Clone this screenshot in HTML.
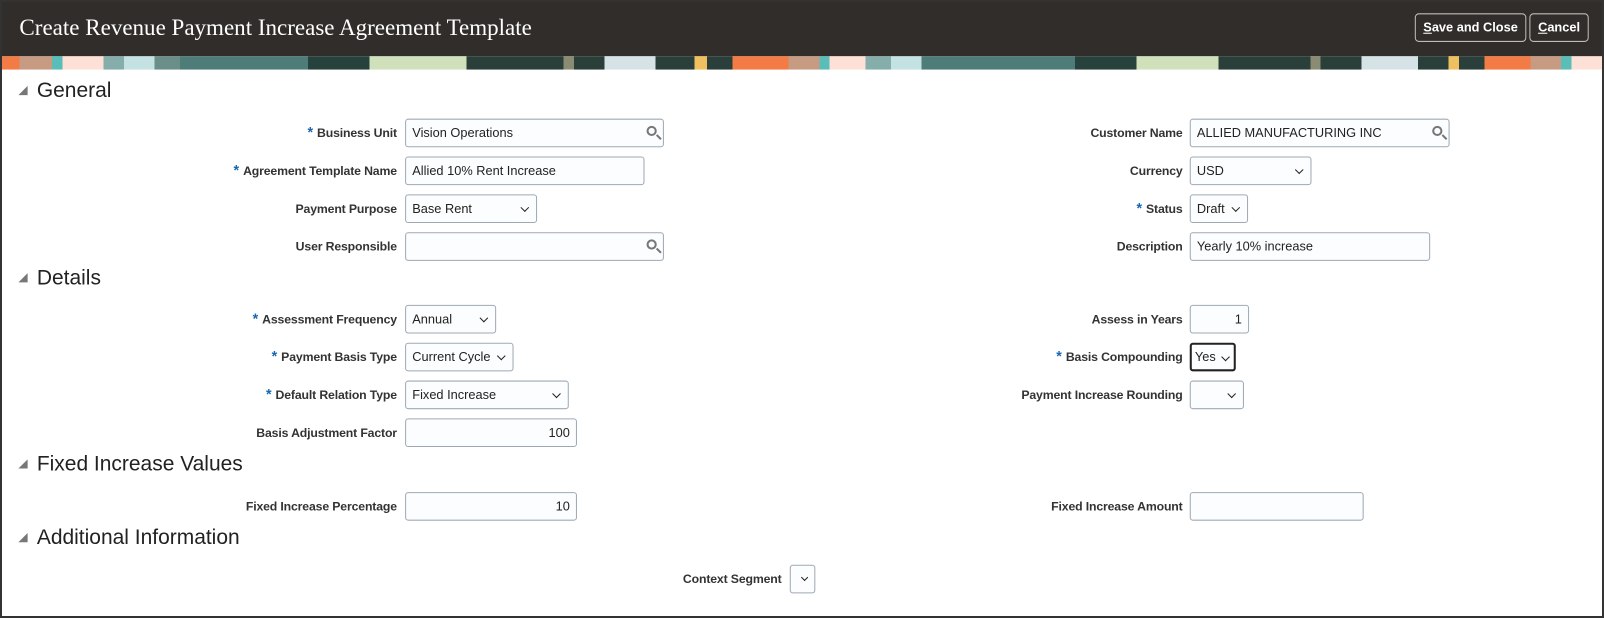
<!DOCTYPE html>
<html><head><meta charset="utf-8"><style>
*{box-sizing:border-box;margin:0;padding:0}
body{width:1604px;height:618px;overflow:hidden;background:#fff;font-family:"Liberation Sans",Arial,sans-serif;position:relative}
.wrap{position:absolute;left:0;top:0;width:1568px;height:604px;transform:scale(1.023);transform-origin:0 0}
.frame{position:absolute;left:0;top:0;width:1604px;height:618px;border:2px solid #333;border-top:1px solid #333}
.hdr{position:absolute;left:1px;top:1px;width:1570px;height:54px;background:#312d2a}
.title{position:absolute;left:18px;top:13px;font-family:"Liberation Serif",serif;font-size:22.5px;color:#fff}
.btn{position:absolute;top:12px;height:28px;border:1px solid #bdbdbd;border-radius:4px;color:#fff;font-weight:bold;font-size:12.5px;line-height:26px;text-align:center}
.banner{position:absolute;left:1px;top:55px;width:1570px;height:13px;background:linear-gradient(90deg,#f37b45 0 18px,#c79a82 18px 50px,#5bbdb8 50px 60px,#fde0d6 60px 100px,#85aeab 100px 120px,#c4e2e2 120px 150px,#6a8f89 150px 175px,#4e7c78 175px 300px,#27413c 300px 360px,#cfe0bb 360px 455px,#2b3f3a 455px 550px,#8a8b73 550px 560px,#2b3f3a 560px 590px,#d5e3e6 590px 640px,#2b3f3a 640px 678px,#f0c060 678px 690px,#2b3f3a 690px 715px,#f37b45 715px 770px,#c79a82 770px 800px,#5bbdb8 800px 810px,#fde0d6 810px 845px,#85aeab 845px 870px,#c4e2e2 870px 900px,#4e7c78 900px 1050px,#27413c 1050px 1110px,#cfe0bb 1110px 1190px,#2b3f3a 1190px 1280px,#8a8b73 1280px 1290px,#2b3f3a 1290px 1330px,#d5e3e6 1330px 1385px,#2b3f3a 1385px 1415px,#f0c060 1415px 1425px,#2b3f3a 1425px 1450px,#f37b45 1450px 1495px,#c79a82 1495px 1525px,#5bbdb8 1525px 1535px,#fde0d6 1535px)}
.sec{position:absolute;left:18px;font-size:20.5px;color:#222}
.sec:before{content:"";display:inline-block;width:0;height:0;border-left:9px solid transparent;border-bottom:9px solid #777;margin-right:9px;vertical-align:2px}
.lbl{position:absolute;font-size:12px;font-weight:bold;color:#333;text-align:right;white-space:nowrap;letter-spacing:-0.15px}
.lbl b{color:#1866b0;font-size:14px;margin-right:4px}
.in{position:absolute;height:28px;border:1px solid #9fa9b3;border-radius:3px;background:#fcfdfe;font-size:12.5px;color:#222;line-height:26px;padding:0 6px;white-space:nowrap}
.r{text-align:right}
.mag{position:absolute;right:6px;top:6px;width:10px;height:10px;border:2px solid #777;border-radius:50%}
.mag:after{content:"";position:absolute;left:7px;top:8px;width:6px;height:2px;background:#777;transform:rotate(45deg)}
.dd{position:absolute;right:8px;top:9px;width:6px;height:6px;border-right:1.6px solid #222;border-bottom:1.6px solid #222;transform:rotate(45deg)}
</style></head><body>
<div class="wrap">
<div class="hdr"><div class="title">Create Revenue Payment Increase Agreement Template</div>
<div class="btn" style="left:1382px;width:109px"><u>S</u>ave and Close</div>
<div class="btn" style="left:1494px;width:58px"><u>C</u>ancel</div></div>
<div class="banner"></div>

<div class="sec" style="top:77px">General</div>
<div class="lbl" style="right:1180px;top:121px"><b>*</b>Business Unit</div>
<div class="in" style="left:396px;top:116px;width:253px">Vision Operations<span class="mag"></span></div>
<div class="lbl" style="right:1180px;top:158px"><b>*</b>Agreement Template Name</div>
<div class="in" style="left:396px;top:153px;width:234px">Allied 10% Rent Increase</div>
<div class="lbl" style="right:1180px;top:197px">Payment Purpose</div>
<div class="in" style="left:396px;top:190px;width:129px">Base Rent<span class="dd"></span></div>
<div class="lbl" style="right:1180px;top:234px">User Responsible</div>
<div class="in" style="left:396px;top:227px;width:253px"><span class="mag"></span></div>

<div class="lbl" style="right:412px;top:123px">Customer Name</div>
<div class="in" style="left:1163px;top:116px;width:254px">ALLIED MANUFACTURING INC<span class="mag"></span></div>
<div class="lbl" style="right:412px;top:160px">Currency</div>
<div class="in" style="left:1163px;top:153px;width:119px">USD<span class="dd"></span></div>
<div class="lbl" style="right:412px;top:195px"><b>*</b>Status</div>
<div class="in" style="left:1163px;top:190px;width:57px">Draft<span class="dd"></span></div>
<div class="lbl" style="right:412px;top:234px">Description</div>
<div class="in" style="left:1163px;top:227px;width:235px">Yearly 10% increase</div>

<div class="sec" style="top:260px">Details</div>
<div class="lbl" style="right:1180px;top:303px"><b>*</b>Assessment Frequency</div>
<div class="in" style="left:396px;top:298px;width:89px">Annual<span class="dd"></span></div>
<div class="lbl" style="right:1180px;top:340px"><b>*</b>Payment Basis Type</div>
<div class="in" style="left:396px;top:335px;width:106px">Current Cycle<span class="dd"></span></div>
<div class="lbl" style="right:1180px;top:377px"><b>*</b>Default Relation Type</div>
<div class="in" style="left:396px;top:372px;width:160px">Fixed Increase<span class="dd"></span></div>
<div class="lbl" style="right:1180px;top:416px">Basis Adjustment Factor</div>
<div class="in r" style="left:396px;top:409px;width:168px">100</div>

<div class="lbl" style="right:412px;top:305px">Assess in Years</div>
<div class="in r" style="left:1163px;top:298px;width:58px">1</div>
<div class="lbl" style="right:412px;top:340px"><b>*</b>Basis Compounding</div>
<div class="in" style="left:1163px;top:335px;width:45px;border:2px solid #222;padding:0 3px;line-height:24px">Yes<span class="dd" style="right:5px"></span></div>
<div class="lbl" style="right:412px;top:379px">Payment Increase Rounding</div>
<div class="in" style="left:1163px;top:372px;width:53px"><span class="dd"></span></div>

<div class="sec" style="top:442px">Fixed Increase Values</div>
<div class="lbl" style="right:1180px;top:488px">Fixed Increase Percentage</div>
<div class="in r" style="left:396px;top:481px;width:168px">10</div>
<div class="lbl" style="right:412px;top:488px">Fixed Increase Amount</div>
<div class="in" style="left:1163px;top:481px;width:170px"></div>

<div class="sec" style="top:514px">Additional Information</div>
<div class="lbl" style="right:804px;top:559px">Context Segment</div>
<div class="in" style="left:772px;top:552px;width:25px"><span class="dd" style="right:7px;width:5px;height:5px"></span></div>
</div>
<div class="frame"></div>
</body></html>
